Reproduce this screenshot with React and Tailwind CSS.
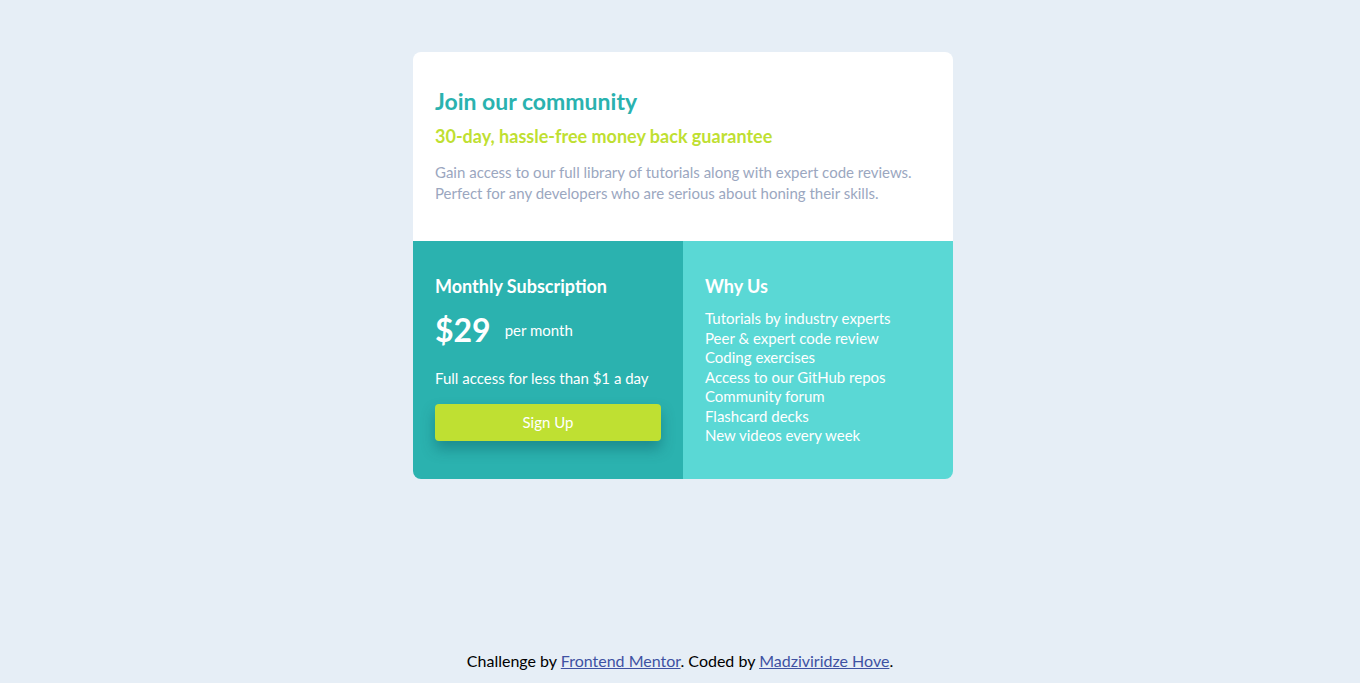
const features = [
  'Tutorials by industry experts',
  'Peer & expert code review',
  'Coding exercises',
  'Access to our GitHub repos',
  'Community forum',
  'Flashcard decks',
  'New videos every week',
];

export default function App() {
  return (
    <div className="min-h-screen flex flex-col bg-[#e6eef6] font-['Lato',sans-serif]">
      <main className="flex justify-center pt-[52px] pl-[6px]">
        <div className="w-[540px] rounded-lg overflow-hidden">
          {/* Top */}
          <section className="bg-white px-[22px] pt-[35px] pb-[37px]">
            <h1 className="text-[23px] font-bold text-[#2ab2af] leading-7">Join our community</h1>
            <h2 className="mt-[9px] text-[18px] font-bold text-[#bfdf32] leading-6">
              30-day, hassle-free money back guarantee
            </h2>
            <p className="mt-[14px] text-[15px] leading-[21px] text-[#9ba7bf]">
              Gain access to our full library of tutorials along with expert code reviews.
              <br />
              Perfect for any developers who are serious about honing their skills.
            </p>
          </section>

          {/* Bottom */}
          <div className="grid grid-cols-2">
            <section className="bg-[#2bb2af] px-[22px] pt-[33px] pb-[38px] text-white">
              <h3 className="text-[18px] font-bold leading-6">Monthly Subscription</h3>
              <div className="mt-[14px] flex items-center gap-[14px]">
                <span className="text-[32px] font-bold leading-9">$29</span>
                <span className="text-[15px]">per month</span>
              </div>
              <p className="mt-[20px] text-[15px] leading-5">Full access for less than $1 a day</p>
              <button className="mt-[16px] w-full h-[37px] rounded-[4px] bg-[#bfe032] text-[15px] text-white shadow-[0_8px_14px_rgba(0,70,80,0.35)]">
                Sign Up
              </button>
            </section>
            <section className="bg-[#5ad8d5] px-[22px] pt-[33px] pb-[30px] text-white">
              <h3 className="text-[18px] font-bold leading-6">Why Us</h3>
              <ul className="mt-[11px] text-[15px] leading-[19.5px]">
                {features.map((f) => (
                  <li key={f}>{f}</li>
                ))}
              </ul>
            </section>
          </div>
        </div>
      </main>

      <footer className="mt-auto pb-[10px] text-center text-[16px] leading-6 text-black">
        Challenge by{' '}
        <a href="#" className="underline text-[#3e52a3]">Frontend Mentor</a>
        . Coded by{' '}
        <a href="#" className="underline text-[#3e52a3]">Madziviridze Hove</a>.
      </footer>
    </div>
  );
}
